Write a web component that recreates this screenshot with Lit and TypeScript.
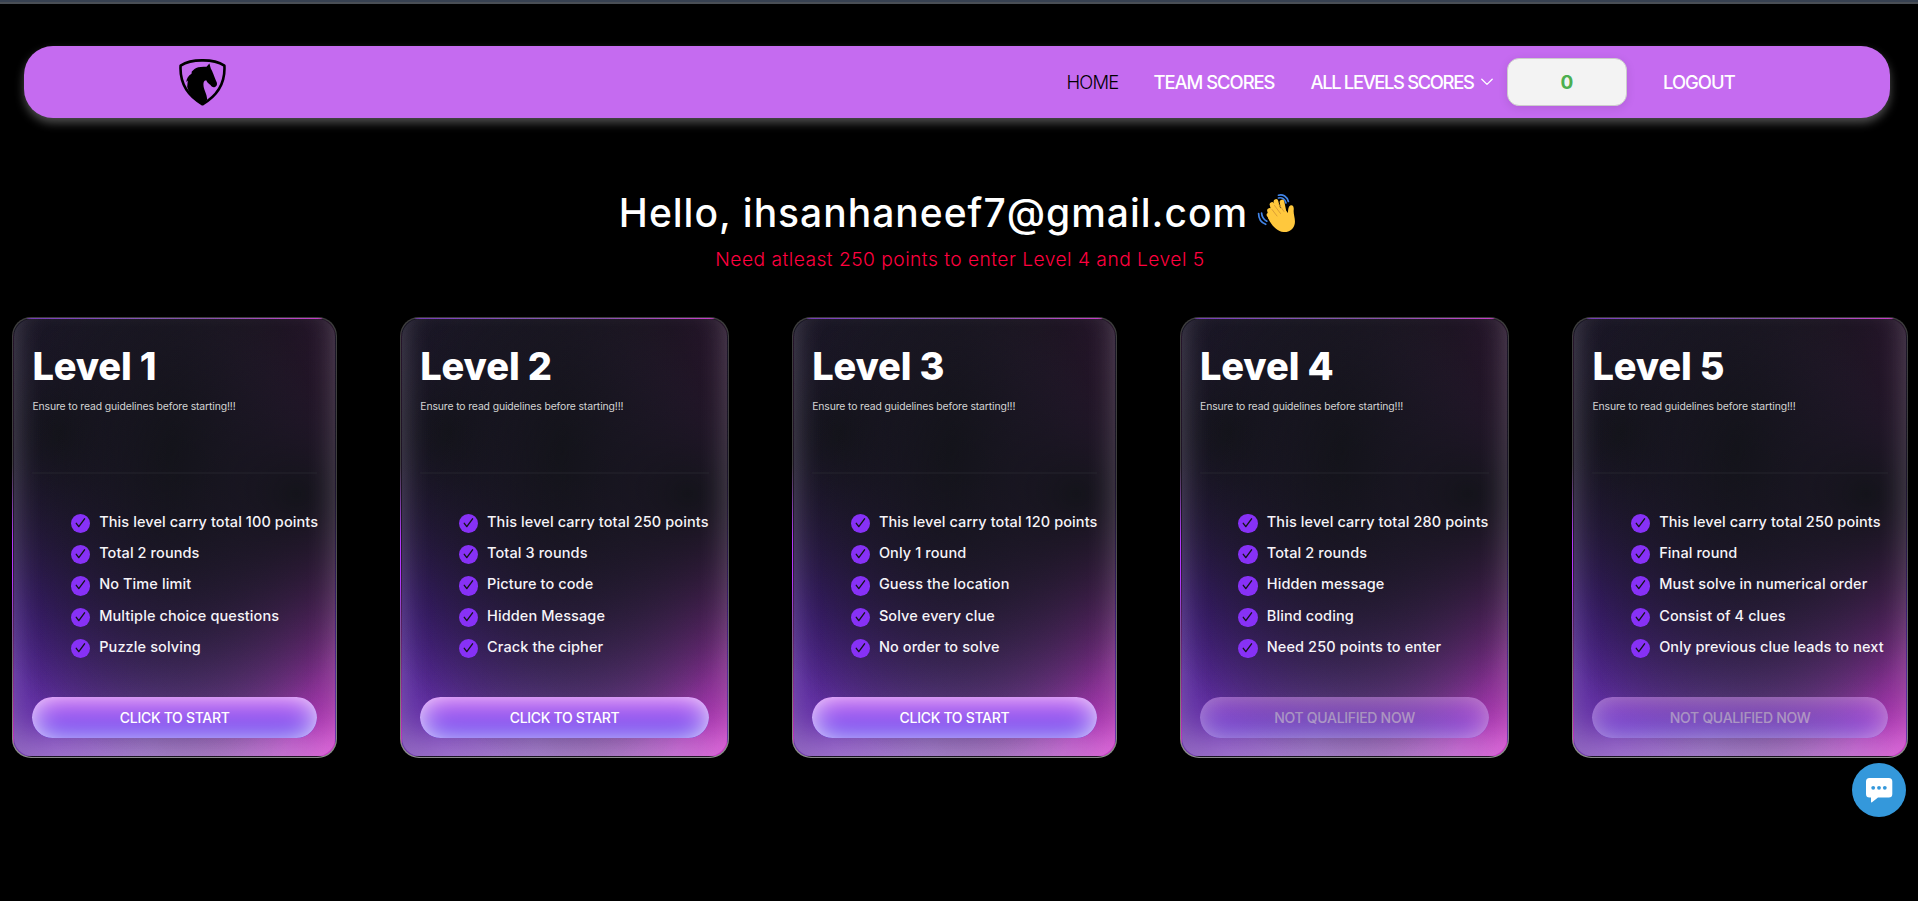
import { LitElement, html, css, svg } from "lit";
import { customElement, property } from "lit/decorators.js";

interface Level {
  title: string;
  points: string[];
  open: boolean;
}

const LEVELS: Level[] = [
  { title: "Level 1", open: true, points: ["This level carry total 100 points", "Total 2 rounds", "No Time limit", "Multiple choice questions", "Puzzle solving"] },
  { title: "Level 2", open: true, points: ["This level carry total 250 points", "Total 3 rounds", "Picture to code", "Hidden Message", "Crack the cipher"] },
  { title: "Level 3", open: true, points: ["This level carry total 120 points", "Only 1 round", "Guess the location", "Solve every clue", "No order to solve"] },
  { title: "Level 4", open: false, points: ["This level carry total 280 points", "Total 2 rounds", "Hidden message", "Blind coding", "Need 250 points to enter"] },
  { title: "Level 5", open: false, points: ["This level carry total 250 points", "Final round", "Must solve in numerical order", "Consist of 4 clues", "Only previous clue leads to next"] },
];

const checkIcon = svg`<path d="M4.400 7.800 6.500 10.500 11.300 4"/>`;

@customElement("level-card")
export class LevelCard extends LitElement {
  @property({ attribute: false }) level!: Level;

  static styles = css`
    :host { display: block; position: relative; z-index: 0; padding: 1px; box-sizing: border-box; height: 441px; }
    .ring {
      position: absolute; inset: 0; z-index: -1; overflow: hidden; border-radius: 19px;
      background-image: linear-gradient(0deg, hsl(0 0% 60%) -10%, hsl(0 0% 24%) 60%, hsl(0 0% 24%) 100%);
    }
    .ring::before {
      content: ""; position: absolute; left: 50%; top: 50%; width: 200%; height: 192px;
      transform-origin: left; transform: translateY(-50%) rotate(172deg);
      background-image: linear-gradient(0deg, hsla(0,0%,100%,0) 0%, hsl(277 95% 60%) 40%, hsl(277 95% 60%) 60%, hsla(0,0%,40%,0) 100%);
    }
    .card {
      box-sizing: border-box; height: 100%; display: flex; flex-direction: column;
      border: 1px solid transparent; border-radius: 19px; padding: 18px 18px 18px 18.4px;
      background-color: hsl(240 15% 9%);
      background-image:
        radial-gradient(at 88% 40%, hsl(240 15% 9%) 0, transparent 85%),
        radial-gradient(at 49% 30%, hsl(240 15% 9%) 0, transparent 85%),
        radial-gradient(at 14% 26%, hsl(240 15% 9%) 0, transparent 85%),
        radial-gradient(at 0% 64%, hsl(263 93% 56%) 0, transparent 85%),
        radial-gradient(at 41% 94%, hsl(284 100% 84%) 0, transparent 85%),
        radial-gradient(at 100% 99%, hsl(306 100% 57%) 0, transparent 85%);
      box-shadow: inset 0 -19px 29px 0 rgba(255,255,255,.25);
    }
    .title { margin: 0; padding-top: 6px; font-size: 38px; font-weight: 800; line-height: 46px; letter-spacing: -.15px; color: #fff; }
    .note { margin: 0; padding-top: 10px; font-size: 10.4px; line-height: 16px; font-weight: 400; letter-spacing: -.12px; color: hsl(0 0% 83%); }
    .rule { border: 0; margin: 57px 0 0; height: 2px; flex: none; background: rgba(43,43,53,.35); }
    .list { list-style: none; margin: 40px 0 0; padding: 0 0 0 38.4px; display: flex; flex-direction: column; gap: 12px; }
    .item { display: flex; gap: 9.2px; align-items: flex-start; height: 19.2px; }
    .check { flex: none; width: 19.2px; height: 19.2px; border-radius: 50%; background: hsl(266 92% 58%); fill: none; stroke: hsl(240 15% 9%); stroke-width: 1.15; stroke-linecap: round; stroke-linejoin: round; }
    .text { font-size: 14.5px; line-height: 16px; font-weight: 500; letter-spacing: .1px; color: #f6f4f8; white-space: nowrap; }
    .button {
      margin-top: auto; height: 41px; flex: none; border: 0; border-radius: 999px; padding: 0;
      font: 500 14px/39px Inter, sans-serif; letter-spacing: -.3px; color: #fff;
      background-image: linear-gradient(0deg, rgb(94,58,238) 0%, rgb(197,107,240) 100%);
      box-shadow: inset 0 -2.4px 30px -4.8px #fff;
    }
    .button:disabled { opacity: .5; color: rgba(255,255,255,.9); }
  `;

  render() {
    const { title, points, open } = this.level;
    return html`
      <div class="ring"></div>
      <article class="card">
        <h2 class="title">${title}</h2>
        <p class="note">Ensure to read guidelines before starting!!!</p>
        <hr class="rule" />
        <ul class="list">
          ${points.map((p) => html`<li class="item"><svg class="check" viewBox="0 0 16 16">${checkIcon}</svg><span class="text">${p}</span></li>`)}
        </ul>
        <button class="button" ?disabled=${!open}>${open ? "CLICK TO START" : "NOT QUALIFIED NOW"}</button>
      </article>`;
  }
}

@customElement("app-root")
export class AppRoot extends LitElement {
  static styles = css`
    :host { display: flex; flex-direction: column; position: relative; box-sizing: border-box; height: 901px; overflow: hidden; background: #000; color: #fff; font-family: Inter, "Open Sans", sans-serif; }
    .strip { flex: none; height: 2px; background: #374151; border-bottom: 2px solid #494e55; }
    .bar {
      flex: none; display: flex; align-items: center; box-sizing: border-box; height: 72px; margin: 42px 28px 0 24px;
      padding: 0 156px 0 155px; border-radius: 29px; background: #c56bf0; box-shadow: 0 5px 10px rgba(255,255,255,.3);
    }
    .logo { width: 47px; height: 47px; margin-right: auto; }
    .link { font-size: 18.4px; line-height: 26px; font-weight: 500; white-space: nowrap; }
    .home { color: #000; font-weight: 300; letter-spacing: -.8px; width: 87px; }
    .team { letter-spacing: -1.02px; width: 157px; }
    .all { letter-spacing: -1.35px; width: 170.5px; }
    .logout { letter-spacing: -.95px; width: 71px; }
    .chevron { width: 12px; height: 8px; margin-right: 14px; }
    .score {
      box-sizing: border-box; width: 120px; height: 48px; margin-right: 36px; border: 1px solid #ccc; border-radius: 12px; background: #f3f3f3;
      color: #4caf50; font-size: 19px; font-weight: 700; line-height: 47px; text-align: center; box-shadow: 0 2px 10px rgba(0,0,0,.1);
    }
    .hello { display: flex; justify-content: center; align-items: center; gap: 9px; height: 50px; margin-top: 70px; padding-right: 2px; }
    .name { margin: 0; font-size: 39px; line-height: 49px; padding-bottom: 1px; font-weight: 500; letter-spacing: 1px; white-space: nowrap; }
    .wave { width: 40px; height: 40px; }
    .need { margin: 7px 0 0; text-align: center; font-size: 19.2px; line-height: 28px; font-weight: 300; letter-spacing: .48px; color: #ff003f; padding-left: 2px; }
    .levels { display: grid; grid-template-columns: 325px 329px 325px 329.5px 336px; justify-content: space-between; margin: 44px 10px 0 12px; }
    .chat { position: absolute; left: 1852px; top: 763px; width: 54px; height: 54px; }
  `;

  render() {
    return html`
      <div class="strip"></div>
      <nav class="bar">
        <svg class="logo" viewBox="0 0 47 47">
          <path d="M23.5 1.4C15 1.3 7.500 2.900 1.600 6.600 0.700 22 6.500 35.500 23.500 45.300 40.500 35.500 46.300 22 45.400 6.600 39.500 2.900 32 1.300 23.500 1.400z" fill="none" stroke="#000" stroke-width="2.600" stroke-linejoin="round" />
          <path d="M23.500 46C14.500 40.500 10.500 35 8.200 28L8.800 21.500 7.300 23C7.500 19.500 9.500 16.500 12.500 14.800L12.800 12.600 15.500 10C18 8.200 22 7.300 27.500 7.800L30.400 4.400 31.800 9.400C33.500 12 35.500 18 37.800 23.500 38.500 25.500 37.500 27.800 35.500 28.200 33.500 28.600 32.500 27.500 31.500 26 29.500 24.500 28.500 23.800 27.200 21.200 24.800 21.500 24 23.500 24.600 27.500 25.300 32 27.800 34.500 28.200 40.500z" />
        </svg>
        <a class="link home">HOME</a>
        <a class="link team">TEAM SCORES</a>
        <a class="link all">ALL LEVELS SCORES</a>
        <svg class="chevron" viewBox="0 0 12 8"><path d="M.8 1.200 6 6.400 11.200 1.200" fill="none" stroke="#fff" stroke-width="1.300" stroke-linecap="round" stroke-linejoin="round" /></svg>
        <div class="score">0</div>
        <a class="link logout">LOGOUT</a>
      </nav>
      <header class="hello">
        <h1 class="name">Hello, ihsanhaneef7@gmail.com</h1>
        <svg class="wave" viewBox="0 0 40 40">
          <g fill="none" stroke="#4285e8" stroke-width="1.700" stroke-linecap="round">
            <path d="M21.500 2.200C26 1 30 3.500 31.400 8.500M21.500 5C25 4 28 6 29 10M1.600 20.500C1.600 25.500 4 29.500 8.700 31.300M4.600 20C4.800 23.500 6.500 26.500 9.800 28.200" />
          </g>
          <g stroke="#ffc83d" stroke-linecap="round" fill="none" stroke-width="4.700">
            <path d="M15 26 12.500 17.500M18 23 15 11.500M22 20 19 8.500M27 19 25 9M16 28 12 22" />
          </g>
          <path d="M11 25 14 19 26 14 31 20C31 17 31.300 12.800 33.800 12.200 36.200 11.800 37 14 36.700 17 36.300 22 38.500 25 37.800 30.500 37 36 32 39.500 26.500 39 20 38.300 14.500 32.500 11 25z" fill="#ffc83d" />
          <path d="M15 16.500 20 23M17.500 12.500 23.500 20.500M22 11.500 27 18.500" stroke="#d79a35" stroke-width=".9" fill="none" stroke-linecap="round" />
        </svg>
      </header>
      <p class="need">Need atleast 250 points to enter Level 4 and Level 5</p>
      <main class="levels">${LEVELS.map((l) => html`<level-card .level=${l}></level-card>`)}</main>
      <svg class="chat" viewBox="0 0 54 54">
        <circle cx="27" cy="27" r="27" fill="#3498db" />
        <path d="M17.500 15h19.300a3.500 3.500 0 0 1 3.500 3.500V31a3.500 3.500 0 0 1-3.500 3.500H26l-6 4.700c-.5.4-1 .2-1-.5v-4.200h-1.500A3.500 3.500 0 0 1 14 31V18.500a3.500 3.500 0 0 1 3.500-3.500z" fill="#fff" />
        <g fill="#3498db"><circle cx="21.200" cy="24.800" r="1.900" /><circle cx="27" cy="24.800" r="1.900" /><circle cx="32.800" cy="24.800" r="1.900" /></g>
      </svg>`;
  }
}
